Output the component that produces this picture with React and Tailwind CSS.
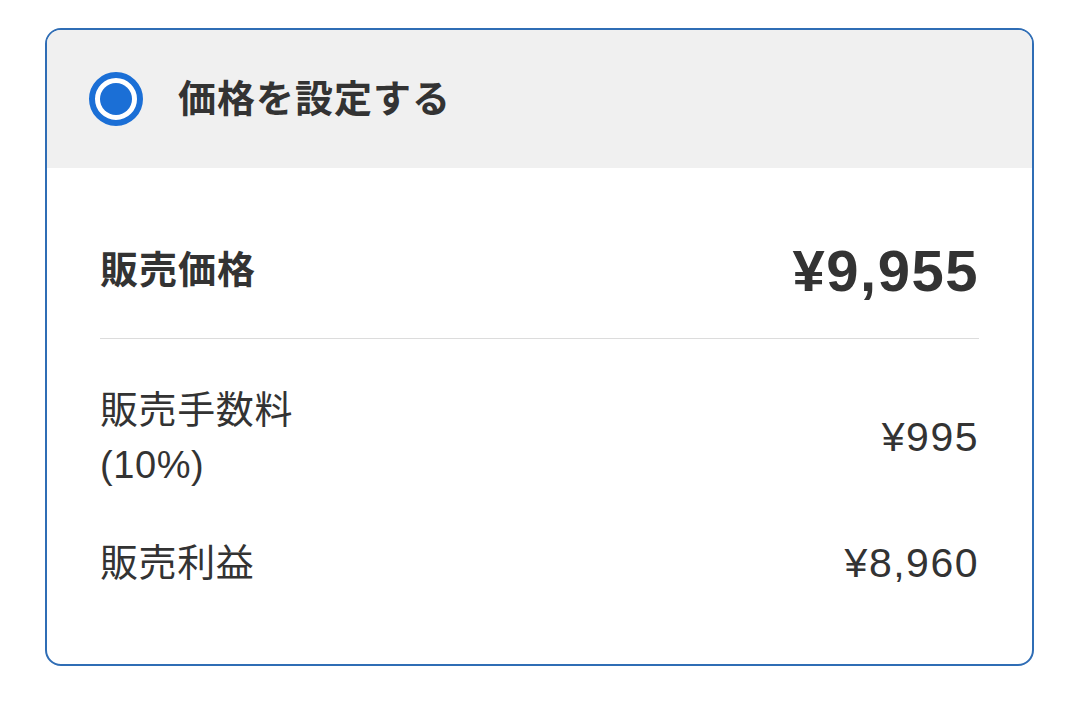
import React from 'react';

const font = { fontFamily: '"Liberation Sans", "Noto Sans CJK JP", sans-serif' };

export default function App() {
    return (
        <div className="min-h-screen bg-white pt-[28px] pl-[45px]" style={font}>
            {/* Price card */}
            <div className="w-[989px] h-[638px] border-2 border-[#2f6db5] rounded-[16px] overflow-hidden bg-white">
                {/* Header */}
                <div className="h-[138px] bg-[#f0f0f0] flex items-center pl-[42px]">
                    <div className="w-[54px] h-[54px] rounded-full border-[6px] border-[#1b6fd6] p-[5px] bg-white">
                        <div className="w-full h-full rounded-full bg-[#1b6fd6]"></div>
                    </div>
                    <span className="ml-[35px] text-[38px] font-bold text-[#333] leading-none tracking-[1px]">価格を設定する</span>
                </div>

                {/* Body */}
                <div className="px-[53px] pt-[72px]">
                    <div className="h-[60px] flex items-center justify-between">
                        <span className="text-[38px] font-bold text-[#333] tracking-[1px]">販売価格</span>
                        <span className="text-[58px] font-bold text-[#333] tracking-[1.5px]">¥9,955</span>
                    </div>
                    <div className="mt-[38px] h-px bg-[#dcdcdc]"></div>

                    <div className="mt-[44px] flex items-center justify-between">
                        <div className="text-[38px] leading-[55px] text-[#333] tracking-[0.6px]">
                            <div>販売手数料</div>
                            <div>(10%)</div>
                        </div>
                        <span className="text-[41px] text-[#333] tracking-[1.5px]">¥995</span>
                    </div>

                    <div className="mt-[43px] h-[55px] flex items-center justify-between">
                        <span className="text-[38px] text-[#333] tracking-[0.6px]">販売利益</span>
                        <span className="text-[41px] text-[#333] tracking-[1.5px]">¥8,960</span>
                    </div>
                </div>
            </div>
        </div>
    );
}
